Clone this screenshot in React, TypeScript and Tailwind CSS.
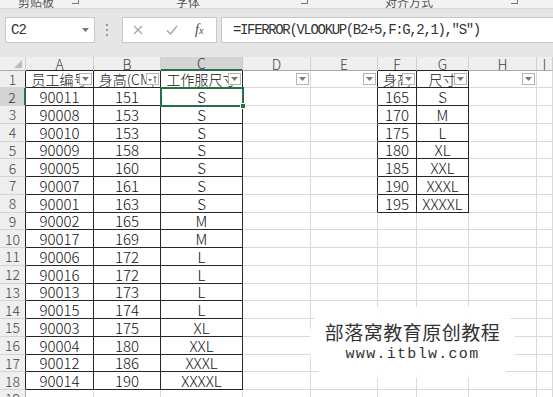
import React from "react";

const TABLE_A: string[][] = [
  ["员工编号", "身高(CM)", "工作服尺寸"],
  ["90011", "151", "S"],
  ["90008", "153", "S"],
  ["90010", "153", "S"],
  ["90009", "158", "S"],
  ["90005", "160", "S"],
  ["90007", "161", "S"],
  ["90001", "163", "S"],
  ["90002", "165", "M"],
  ["90017", "169", "M"],
  ["90006", "172", "L"],
  ["90016", "172", "L"],
  ["90013", "173", "L"],
  ["90015", "174", "L"],
  ["90003", "175", "XL"],
  ["90004", "180", "XXL"],
  ["90012", "186", "XXXL"],
  ["90014", "190", "XXXXL"],
];

const TABLE_F: string[][] = [
  ["身高", "尺寸"],
  ["165", "S"],
  ["170", "M"],
  ["175", "L"],
  ["180", "XL"],
  ["185", "XXL"],
  ["190", "XXXL"],
  ["195", "XXXXL"],
];

const COLS = ["A", "B", "C", "D", "E", "F", "G", "H", "I"];
const ROWS = Array.from({ length: 19 }, (_, i) => i + 1);

const FilterButton = ({ sorted = false }: { sorted?: boolean }) => (
  <span className="absolute right-[1px] top-1/2 z-[5] flex h-[12px] w-[13px] -translate-y-1/2 items-center justify-center border border-[#b4b4b4] bg-white">
    {sorted ? (
      <svg width="11" height="9" viewBox="0 0 11 9">
        <path d="M1 4h4L3 6.5z" fill="#6b6b6b" />
        <path d="M8 8V1.5M6.5 3L8 1.2 9.5 3" stroke="#6b6b6b" strokeWidth="1" fill="none" />
      </svg>
    ) : (
      <svg width="7" height="4" viewBox="0 0 7 4">
        <path d="M0 0h7L3.5 4z" fill="#7a7a7a" />
      </svg>
    )}
  </span>
);

const cellValue = (r: number, c: number) => {
  if (c <= 2 && r <= 18) return TABLE_A[r - 1][c];
  if ((c === 5 || c === 6) && r <= 8) return TABLE_F[r - 1][c - 5];
  return "";
};

const borderFor = (r: number, c: number) => {
  const inTable = (c <= 2 && r <= 18) || ((c === 5 || c === 6) && r <= 8);
  if (inTable) return "border-b-[#262626] border-r-[#262626]";
  if (c === 4 && r <= 8) return "border-b-[#dadada] border-r-[#262626]";
  return "border-b-[#dadada] border-r-[#dadada]";
};

const hasFilter = (c: number) => c <= 7;

export default function App() {
  return (
    <div className="relative h-[397px] w-[553px] overflow-hidden bg-white font-['Noto_Sans_CJK_SC',sans-serif]">
      {/* ribbon group labels, cut off at the top */}
      <div className="flex h-[9px] items-start overflow-hidden border-b border-b-[#d8d8d8] bg-[#f3f3f3] text-[12px] leading-[12px] text-[#555]">
        <span className="ml-[18px] -mt-[4px]">剪贴板</span>
        <span className="ml-[18px] -mt-[3px] h-[7px] w-[7px] border-b border-r border-[#777]" />
        <span className="ml-[97px] -mt-[4px]">字体</span>
        <span className="ml-[101px] -mt-[3px] h-[7px] w-[7px] border-b border-r border-[#777]" />
        <span className="ml-[77px] -mt-[4px]">对齐方式</span>
        <span className="ml-[78px] -mt-[3px] h-[7px] w-[7px] border-b border-r border-[#777]" />
      </div>

      {/* formula bar */}
      <div className="flex h-[48px] items-start bg-[#e6e6e6] pt-[8px]">
        <div className="ml-[5px] flex h-[26px] w-[90px] items-center justify-between border border-[#c8c8c8] bg-white pl-[5px] pr-[5px]">
          <span className="font-['Liberation_Mono',monospace] text-[14px] tracking-[-1px] text-[#333]">C2</span>
          <svg width="7" height="4" viewBox="0 0 7 4">
            <path d="M0 0h7L3.5 4z" fill="#777" />
          </svg>
        </div>
        <div className="ml-[10px] flex h-[26px] w-[4px] flex-col items-center justify-center gap-[3px]">
          <span className="h-[2px] w-[2px] bg-[#9a9a9a]" />
          <span className="h-[2px] w-[2px] bg-[#9a9a9a]" />
          <span className="h-[2px] w-[2px] bg-[#9a9a9a]" />
        </div>
        <div className="ml-[13px] flex h-[26px] w-[95px] items-center border border-[#c8c8c8] bg-white">
          <svg className="ml-[10px]" width="10" height="10" viewBox="0 0 10 10">
            <path d="M1 1l8 8M9 1l-8 8" stroke="#a3a3a3" strokeWidth="1.2" />
          </svg>
          <svg className="ml-[23px]" width="12" height="10" viewBox="0 0 12 10">
            <path d="M1 5.5l3.5 3.5L11 1" stroke="#a3a3a3" strokeWidth="1.3" fill="none" />
          </svg>
          <span className="ml-[17px] font-['Liberation_Serif',serif] text-[14px] italic leading-none text-[#444]">
            f<span className="text-[10px]">x</span>
          </span>
        </div>
        <div className="ml-[4px] flex h-[26px] flex-1 items-center border border-r-0 border-[#c8c8c8] bg-white pl-[11px]">
          <span className="whitespace-nowrap font-['Liberation_Mono',monospace] text-[14px] tracking-[-1.35px] text-[#333]">
            =IFERROR(VLOOKUP(B2+5,F:G,2,1),"S")
          </span>
        </div>
      </div>

      {/* sheet */}
      <div className="relative grid grid-cols-[26px_68px_67px_82px_68px_67px_39px_52px_68px_1fr] font-light">
        <div className="flex h-[14px] items-end justify-end border-b border-r border-b-[#ababab] border-r-[#d0d0d0] bg-[#efefef] pb-[2px] pr-[3px]">
          <svg width="8" height="8" viewBox="0 0 8 8">
            <path d="M8 0v8H0z" fill="#bdbdbd" />
          </svg>
        </div>
        {COLS.map((col, c) => (
          <div
            key={col}
            className={
              c === 2
                ? "flex h-[14px] items-center justify-center overflow-hidden border-b-2 border-r border-b-[#217346] border-r-[#c8c8c8] bg-[#d4d4d4] text-[14px] leading-none text-[#333]"
                : c <= 1 || c === 5 || c === 6
                  ? "flex h-[14px] items-center justify-center overflow-hidden border-b border-r border-b-[#262626] border-r-[#d0d0d0] bg-[#efefef] text-[14px] leading-none text-[#444]"
                  : "flex h-[14px] items-center justify-center overflow-hidden border-b border-r border-b-[#ababab] border-r-[#d0d0d0] bg-[#efefef] text-[14px] leading-none text-[#444]"
            }
          >
            {col}
          </div>
        ))}

        {ROWS.map((r) => (
          <React.Fragment key={r}>
            <div
              className={
                r === 2
                  ? "flex h-[17.75px] items-center justify-center overflow-hidden border-b border-r-2 border-b-[#d4d4d4] border-r-[#217346] bg-[#d4d4d4] text-[14px] leading-none text-[#333]"
                  : r === 1
                    ? "flex h-[17.25px] items-center justify-center overflow-hidden border-b border-r border-b-[#d4d4d4] border-r-[#262626] bg-[#efefef] text-[14px] leading-none text-[#444]"
                    : r <= 18
                      ? "flex h-[17.75px] items-center justify-center overflow-hidden border-b border-r border-b-[#d4d4d4] border-r-[#262626] bg-[#efefef] text-[14px] leading-none text-[#444]"
                      : "flex h-[17.75px] items-center justify-center overflow-hidden border-b border-r border-b-[#d4d4d4] border-r-[#ababab] bg-[#efefef] text-[14px] leading-none text-[#444]"
              }
            >
              {r}
            </div>
            {COLS.map((col, c) => (
              <div
                key={col}
                className={`relative flex items-center justify-center overflow-hidden whitespace-nowrap border-b border-r leading-none text-[#111] ${
                  r === 1 ? "h-[17.25px] text-[14px]" : "h-[17.75px] text-[15px]"
                } ${borderFor(r, c)}`}
              >
                {cellValue(r, c)}
                {r === 1 && hasFilter(c) && <FilterButton sorted={c === 1} />}
              </div>
            ))}
          </React.Fragment>
        ))}

        {/* active cell C2 */}
        <span className="absolute left-[160px] top-[30.25px] z-10 h-[19.75px] w-[84px] border-2 border-[#217346]">
          <span className="absolute -bottom-[4px] -right-[4px] h-[6px] w-[6px] border border-white bg-[#217346]" />
        </span>
      </div>

      {/* watermark */}
      <div className="absolute left-[310px] top-[307px] z-20 flex h-[71px] w-[205px] flex-col items-center justify-center gap-[3px] rounded-[26px] bg-white/95">
        <span className="text-[19px] leading-[22px] tracking-[0.5px] text-[#333]">部落窝教育原创教程</span>
        <span className="font-['Liberation_Mono',monospace] text-[15px] leading-[18px] tracking-[1.3px] text-[#333]">
          www.itblw.com
        </span>
      </div>
    </div>
  );
}
